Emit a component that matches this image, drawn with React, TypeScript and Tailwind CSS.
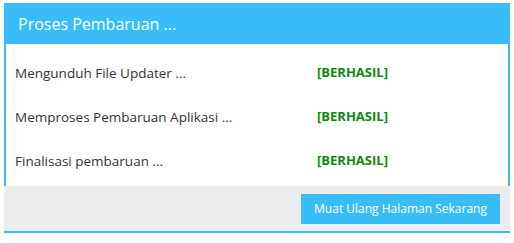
export default function App() {
  const rows = [
    "Mengunduh File Updater ...",
    "Memproses Pembaruan Aplikasi ...",
    "Finalisasi pembaruan ...",
  ];
  return (
    <div className="w-[514px] h-[243px] bg-white pt-[3px] pl-[4px]" style={{ fontFamily: '"Open Sans", sans-serif' }}>
      <div className="w-[506px]">
        <div className="h-[41px] bg-[#38bdf8] flex items-center pl-[14px] text-white text-[16px]">
          Proses Pembaruan ...
        </div>
        <div className="h-[142px] border-x-2 border-[#38bdf8] pt-[7px] bg-white">
          {rows.map((r) => (
            <div key={r} className="h-[44px] flex items-center pl-[9px] text-[13.5px] text-[#333333]">
              <div className="w-[302px]">{r}</div>
              <div className="font-bold text-[13px] text-[#0b8a0b]">[BERHASIL]</div>
            </div>
          ))}
        </div>
        <div className="h-[47px] bg-[#ececec] border-b-2 border-[#38bdf8] flex items-center justify-end pr-[10px]">
          <button className="w-[199px] h-[30px] bg-[#38bdf8] text-white text-[12px]">
            Muat Ulang Halaman Sekarang
          </button>
        </div>
      </div>
    </div>
  );
}
